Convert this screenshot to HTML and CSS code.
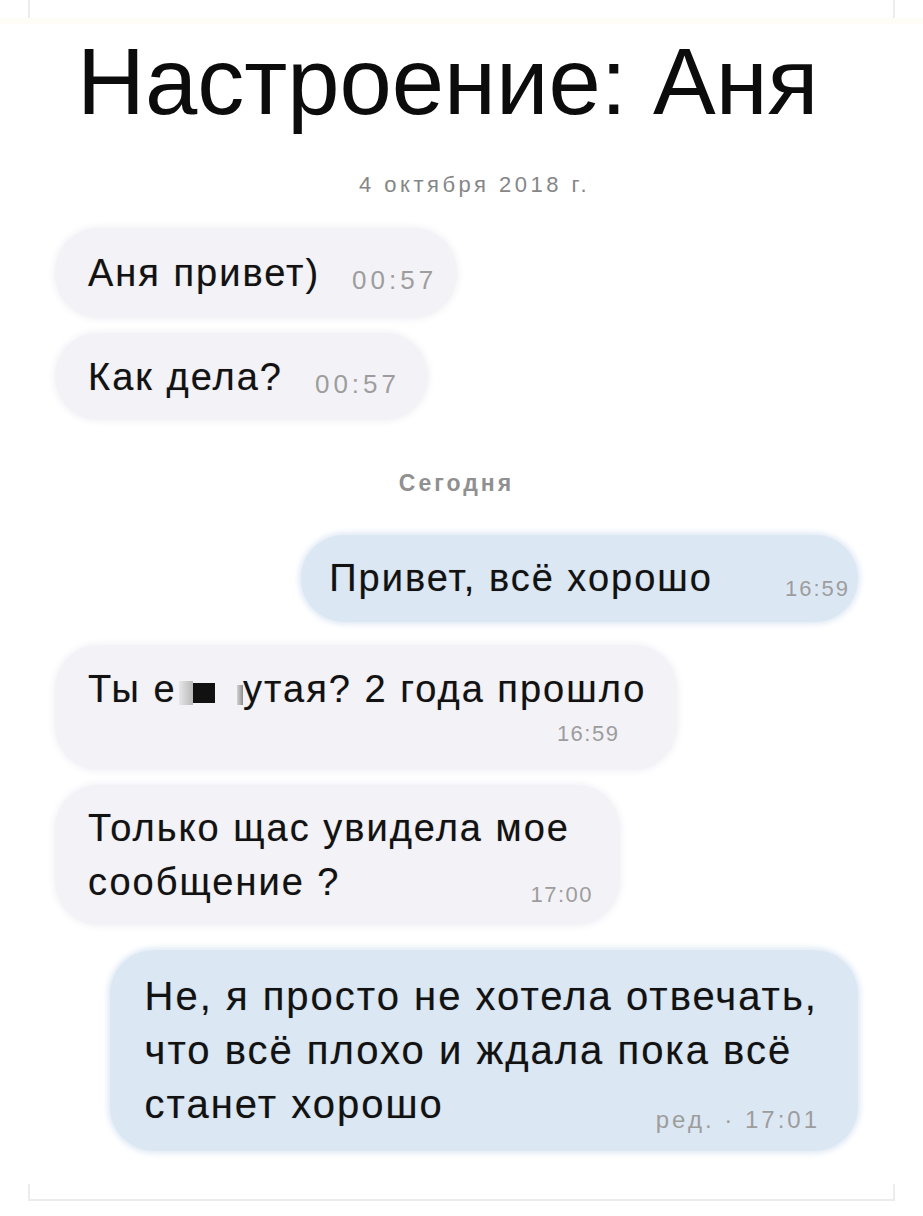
FILE: index.html
```html
<!DOCTYPE html>
<html lang="ru">
<head>
    <meta charset="UTF-8">
    <meta name="viewport" content="width=device-width, initial-scale=1.0">
    <title>Настроение: Аня</title>
    <link rel="stylesheet" href="styles.css">
</head>
<body>
    <div class="frame-top"></div>
    <div class="strip"></div>

    <h1 class="title">Настроение: Аня</h1>

    <div class="chat">
        <div class="day">4 октября 2018 г.</div>

        <!-- Старые сообщения -->
        <div class="msg in first">Аня привет)<span class="time big">00:57</span></div>
        <div class="msg in second">Как дела?<span class="time big">00:57</span></div>

        <div class="day today">Сегодня</div>

        <div class="msg out short">Привет, всё хорошо<span class="time wide">16:59</span></div>

        <div class="msg in tall">
            Ты е<span class="smudge"></span><span class="blot"></span> <span class="sliver"></span>утая? 2 года прошло
            <span class="time below">16:59</span>
        </div>

        <div class="msg in two">
            Только щас увидела мое<br>сообщение ?<span class="time far">17:00</span>
        </div>

        <div class="msg out three">
            Не, я просто не хотела отвечать,<br>что всё плохо и ждала пока всё<br>станет хорошо<span class="time far edited">ред. · 17:01</span>
        </div>
    </div>

    <div class="frame-bottom"></div>
</body>
</html>
```

FILE: styles.css
```css
body {
    margin: 0;
    background-color: #ffffff;
    font-family: "Liberation Sans", Arial, sans-serif;
    color: #121212;
}

/* рамка сверху и снизу */
.frame-top {
    height: 18px;
    margin: 0 28px;
    border-left: 2px solid #ececec;
    border-right: 2px solid #ececec;
}

.strip {
    height: 6px;
    background-color: #fdfcf6;
}

.frame-bottom {
    height: 15px;
    margin: 33px 28px 0;
    border: 2px solid #ececec;
    border-top: none;
}

.title {
    margin: 11px 0 0 77px;
    font-size: 94px;
    font-weight: normal;
    line-height: 94px;
    color: #0c0c0c;
}

.chat {
    display: flex;
    flex-direction: column;
    padding: 0 65px 0 55px;
}

.day {
    align-self: center;
    margin: 44px 0 31px 36px;
    font-size: 22px;
    line-height: 24px;
    letter-spacing: 3.5px;
    color: #868686;
}

.day.today {
    margin: 51px 0 40px 0;
    font-size: 23px;
    font-weight: bold;
    letter-spacing: 3px;
    color: #909090;
}

.msg {
    padding: 18px 20px 18px 33px;
    border-radius: 44px;
    font-size: 38px;
    line-height: 54px;
    letter-spacing: 2px;
    white-space: nowrap;
    text-shadow: 0 0 1px rgba(0, 0, 0, 0.3);
}

.msg + .msg {
    margin-top: 15px;
}

.msg.in {
    align-self: flex-start;
    background-color: #f3f2f7;
    box-shadow: 0 0 6px 2px #f3f2f7;
}

.msg.out {
    align-self: flex-end;
    background-color: #dce7f4;
    box-shadow: 0 0 6px 2px #dce7f4;
}

.msg.second {
    padding: 17px 28px 16px 33px;
}

.msg.short {
    padding: 16px 8px 17px 28px;
}

.msg.tall {
    margin-top: 23px;
    padding: 17px 31px 18px 33px;
}

.msg.two {
    padding: 16px 27px 16px 33px;
}

.msg.three {
    margin-top: 25px;
    padding: 19px 38px 19px 35px;
    font-size: 40px;
    letter-spacing: 2px;
}

.time {
    margin-left: 32px;
    font-size: 22px;
    line-height: 1;
    letter-spacing: 1.5px;
    color: #9d9d9d;
    text-shadow: none;
    vertical-align: -3px;
}

.time.big {
    font-size: 26px;
    letter-spacing: 4px;
}

.time.wide {
    margin-left: 72px;
    letter-spacing: 2px;
    vertical-align: -5px;
}

.time.below {
    display: block;
    margin-right: 27px;
    text-align: right;
    line-height: 36px;
    vertical-align: baseline;
}

.time.far {
    margin-left: 190px;
    vertical-align: -7px;
}

.time.edited {
    margin-left: 212px;
    font-size: 24px;
    letter-spacing: 3px;
    vertical-align: -10px;
}

/* замазанное слово */
.smudge {
    display: inline-block;
    width: 14px;
    height: 24px;
    margin-left: 2px;
    background: linear-gradient(to right, #e6e6e6, #b9b9b9);
    vertical-align: -3px;
}

.blot {
    display: inline-block;
    width: 22px;
    height: 20px;
    background-color: #111111;
    vertical-align: -1px;
}

.sliver {
    display: inline-block;
    width: 6px;
    height: 20px;
    margin-left: 10px;
    background: linear-gradient(to right, #d2d2d2, #8f8f8f);
    vertical-align: -3px;
}
```
